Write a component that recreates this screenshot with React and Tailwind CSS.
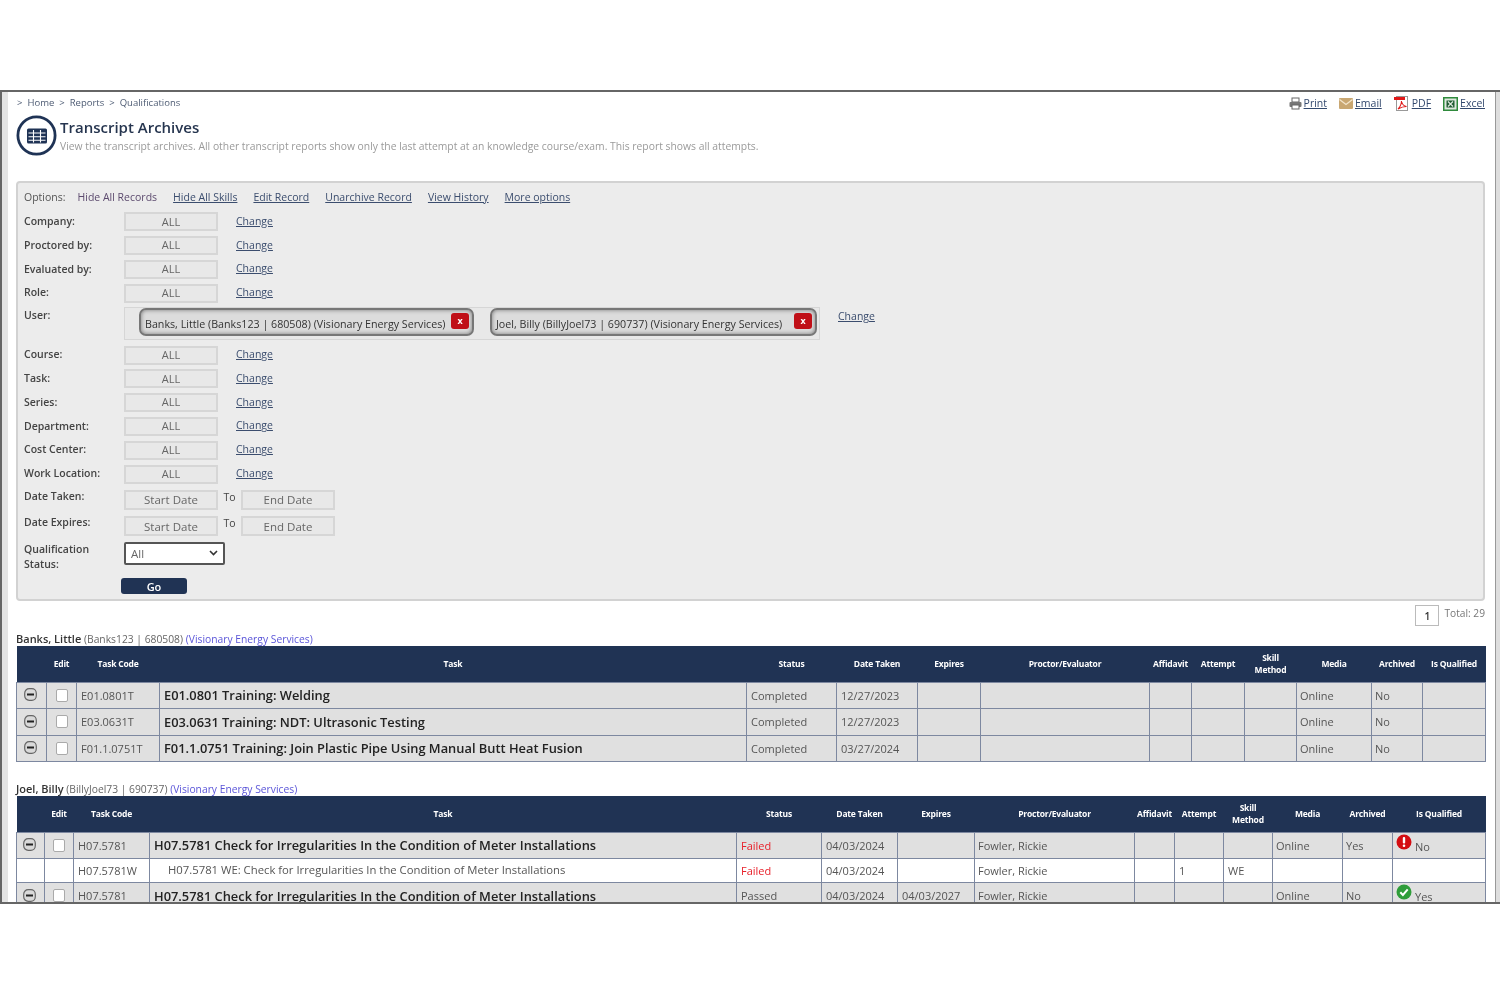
/**
 * Transcript Archives report page
 */

const font = { fontFamily: '"Open Sans", "Noto Sans", sans-serif' };

function PageIcon() {
    return (
        <svg width="41" height="41" viewBox="0 0 41 41" className="shrink-0">
            <circle cx="20.5" cy="20.5" r="18.6" fill="#fff" stroke="#1f3355" strokeWidth="2.8" />
            <rect x="11" y="13.5" width="20" height="15" rx="1.5" fill="#1f3355" />
            <path d="M12.5 18h17M12.5 21.7h17M12.5 25.3h17M17.5 15v12.5M24.5 15v12.5" stroke="#fff" strokeWidth="1.1" />
        </svg>
    );
}

function PrintIcon() {
    return (
        <svg width="13" height="13" viewBox="0 0 13 13">
            <rect x="3" y="1" width="7" height="4" fill="#fff" stroke="#666" />
            <rect x="0.5" y="5" width="12" height="5" rx="1" fill="#777" />
            <rect x="3" y="8" width="7" height="4" fill="#fff" stroke="#666" />
        </svg>
    );
}

function MailIcon() {
    return (
        <svg width="14" height="11" viewBox="0 0 14 11">
            <rect width="14" height="11" rx="1" fill="#c9a772" />
            <path d="M0.5 1.5 7 6.5l6.5-5" fill="none" stroke="#f3e5cc" strokeWidth="1.3" />
        </svg>
    );
}

function PdfIcon() {
    return (
        <svg width="16" height="15" viewBox="0 0 16 15">
            <rect x="2.5" y="0.5" width="11" height="14" fill="#fff" stroke="#999" />
            <rect x="0" y="1" width="11" height="3" fill="#e01818" />
            <path d="M4 13c2-2 3.500-5 3.500-8 .5 3 2.500 5 5 5.500-3 0-6 1-8.500 2.500Z" fill="none" stroke="#e01818" strokeWidth="1.1" />
        </svg>
    );
}

function ExcelIcon() {
    return (
        <svg width="15" height="14" viewBox="0 0 15 14">
            <rect x="0.750" y="0.750" width="13.500" height="12.500" fill="#dfe8df" stroke="#2f8a3c" strokeWidth="1.500" />
            <rect x="3.500" y="3.500" width="8" height="7" fill="#1f5c30" />
            <path d="m5 4.500 5 5m0-5-5 5" stroke="#dfe8df" strokeWidth="1.200" />
        </svg>
    );
}

function TopLink({ icon, label }) {
    return (
        <span className="flex items-center gap-[2px]">
            {icon}
            <a className="text-[10.5px] text-[#33496e] underline">{label}</a>
        </span>
    );
}

function Box({ label }) {
    return (
        <div className="w-[94px] h-[19px] bg-[#e8e8e8] border-2 border-[#d6d6d6] flex items-center justify-center text-[11px] text-[#666]">
            {label}
        </div>
    );
}

function ChangeLink({ className }) {
    return <a className={`text-[10.5px] leading-[14px] text-[#3b4d6e] underline ${className}`}>Change</a>;
}

function FilterRow({ label }) {
    return (
        <div className="flex items-center h-[23.800px]">
            <span className="w-[100px] text-[10.500px] font-semibold text-[#444]">{label}</span>
            <Box label="ALL" />
            <ChangeLink className="ml-[18px] mb-[2px]" />
        </div>
    );
}

function UserChip({ children, width }) {
    return (
        <div className={`${width} h-[28px] -mt-[3px] rounded-[7px] border-2 border-[#777] bg-[#dcdcdc] shadow-[inset_0_0_4px_#777] flex items-center justify-between pl-[4px] pr-[3px]`}>
            <span className="text-[10.700px] text-[#333] whitespace-nowrap pt-[4px]">{children}</span>
            <span className="w-[18px] h-[16px] mb-[3px] bg-[#c00f17] rounded-[3px] text-white text-[9px] font-bold flex items-center justify-center leading-none">
                x
            </span>
        </div>
    );
}

function DateRow({ label }) {
    return (
        <div className="flex h-[26.500px] items-start">
            <span className="w-[100px] text-[10.500px] font-semibold text-[#444] -mt-[1px]">{label}</span>
            <div className="w-[94px] h-[20px] bg-[#e8e8e8] border-2 border-[#d6d6d6] flex items-center justify-center text-[11.500px] text-[#666]">
                Start Date
            </div>
            <span className="w-[23px] text-center text-[10.500px] text-[#444]">To</span>
            <div className="w-[94px] h-[20px] bg-[#e8e8e8] border-2 border-[#d6d6d6] flex items-center justify-center text-[11.500px] text-[#666]">
                End Date
            </div>
        </div>
    );
}

function MinusIcon() {
    return (
        <svg width="13" height="13" viewBox="0 0 13 13" className="mx-auto -mt-[1px]">
            <rect x="0.700" y="0.700" width="11.600" height="11.600" rx="4.500" fill="#d9d9d9" stroke="#666" strokeWidth="1.200" />
            <rect x="3" y="5.500" width="7" height="2" fill="#222" />
        </svg>
    );
}

function CheckBox() {
    return <div className="w-[12px] h-[13px] mx-auto bg-white border border-[#aaa] rounded-[2px]" />;
}

function FailIcon() {
    return (
        <svg width="16" height="16" viewBox="0 0 16 16" className="inline-block align-[1px] mr-[3px]">
            <circle cx="8" cy="8" r="7.500" fill="#d40d12" />
            <rect x="6.800" y="3" width="2.400" height="6.500" rx="1" fill="#fff" />
            <circle cx="8" cy="11.800" r="1.300" fill="#fff" />
        </svg>
    );
}

function PassIcon() {
    return (
        <svg width="16" height="16" viewBox="0 0 16 16" className="inline-block align-[1px] mr-[3px]">
            <circle cx="8" cy="8" r="7.500" fill="#2f9d3a" />
            <path d="m4.300 8.300 2.600 2.700 4.800-5.600" fill="none" stroke="#fff" strokeWidth="2" />
        </svg>
    );
}

const headers = ['', 'Edit', 'Task Code', 'Task', 'Status', 'Date Taken', 'Expires', 'Proctor/Evaluator', 'Affidavit', 'Attempt', 'Skill Method', 'Media', 'Archived', 'Is Qualified'];

function ReportTable({ widths, rows }) {
    return (
        <table className="table-fixed border-collapse w-[1469px]">
            <colgroup>
                {widths.map((w, i) => (
                    <col key={i} style={{ width: w }} />
                ))}
            </colgroup>
            <thead>
                <tr className="h-[36px] bg-[#203354]">
                    {headers.map((h, i) => (
                        <th key={i} className="text-white text-[8.500px] tracking-[-0.2px] font-bold text-center leading-[12px] pt-[1px]">
                            {h === 'Skill Method' ? (
                                <>
                                    Skill
                                    <br />
                                    Method
                                </>
                            ) : (
                                <span className="whitespace-nowrap">{h}</span>
                            )}
                        </th>
                    ))}
                </tr>
            </thead>
            <tbody>
                {rows.map((r, i) => (
                    <tr key={i} className={`${r.sub ? 'bg-white h-[24px]' : 'bg-[#e0e0e0] h-[26.500px]'} text-[11px] text-[#555]`}>
                        <td className="border border-[#7d88a0] p-0 pr-[2px] text-center">{!r.sub && <MinusIcon />}</td>
                        <td className="border border-[#7d88a0] p-0">{!r.sub && <CheckBox />}</td>
                        <td className="border border-[#7d88a0] pl-[4px] pt-[1px] text-[11px] whitespace-nowrap">{r.code}</td>
                        <td className={`border border-[#7d88a0] whitespace-nowrap ${r.sub ? 'pl-[18px] text-[11.300px] text-[#555]' : 'pl-[4px] pt-[1px] text-[12.850px] font-semibold text-[#222]'}`}>
                            {r.task}
                        </td>
                        <td className={`border border-[#7d88a0] pl-[4px] pt-[1px] ${r.status === 'Failed' ? 'text-[#e8202a]' : ''}`}>{r.status}</td>
                        <td className="border border-[#7d88a0] pl-[4px] pt-[1px]">{r.date}</td>
                        <td className="border border-[#7d88a0] pl-[4px] pt-[1px]">{r.expires}</td>
                        <td className="border border-[#7d88a0] pl-[3px] pt-[1px]">{r.proctor}</td>
                        <td className="border border-[#7d88a0]" />
                        <td className="border border-[#7d88a0] pl-[4px] pt-[1px]">{r.attempt}</td>
                        <td className="border border-[#7d88a0] pl-[4px] pt-[1px]">{r.method}</td>
                        <td className="border border-[#7d88a0] pl-[3px] pt-[1px]">{r.media}</td>
                        <td className="border border-[#7d88a0] pl-[3px] pt-[1px]">{r.archived}</td>
                        <td className="border border-[#7d88a0] pl-[3px] pb-[2px] leading-[16px] whitespace-nowrap">
                            {r.qualified === 'No' && <FailIcon />}
                            {r.qualified === 'Yes' && <PassIcon />}
                            {r.qualified}
                        </td>
                    </tr>
                ))}
            </tbody>
        </table>
    );
}

const firstRows = [
    { code: 'E01.0801T', task: 'E01.0801 Training: Welding', status: 'Completed', date: '12/27/2023', media: 'Online', archived: 'No' },
    { code: 'E03.0631T', task: 'E03.0631 Training: NDT: Ultrasonic Testing', status: 'Completed', date: '12/27/2023', media: 'Online', archived: 'No' },
    { code: 'F01.1.0751T', task: 'F01.1.0751 Training: Join Plastic Pipe Using Manual Butt Heat Fusion', status: 'Completed', date: '03/27/2024', media: 'Online', archived: 'No' },
];

const secondRows = [
    { code: 'H07.5781', task: 'H07.5781 Check for Irregularities In the Condition of Meter Installations', status: 'Failed', date: '04/03/2024', proctor: 'Fowler, Rickie', media: 'Online', archived: 'Yes', qualified: 'No' },
    { sub: true, code: 'H07.5781W', task: 'H07.5781 WE: Check for Irregularities In the Condition of Meter Installations', status: 'Failed', date: '04/03/2024', proctor: 'Fowler, Rickie', attempt: '1', method: 'WE' },
    { code: 'H07.5781', task: 'H07.5781 Check for Irregularities In the Condition of Meter Installations', status: 'Passed', date: '04/03/2024', expires: '04/03/2027', proctor: 'Fowler, Rickie', media: 'Online', archived: 'No', qualified: 'Yes' },
];

function UserHeading({ name, meta }) {
    return (
        <div className="text-[10.300px] h-[15px] leading-[15px] whitespace-nowrap text-[#666]">
            <span className="text-[#333] text-[11px] font-semibold">{name}</span> ({meta}){' '}
            <span className="text-[#5a55d8]">(Visionary Energy Services)</span>
        </div>
    );
}

export default function App() {
    return (
        <div className="min-h-[1000px] bg-white pt-[90px]" style={font}>
            {/* Screenshot frame */}
            <div className="h-[814px] overflow-hidden border-y-2 border-[#666] flex">
                <div className="w-[8px] shrink-0 bg-[#e4e4e4] border-l-2 border-[#666]" />
                <div className="flex-1 min-w-0 pl-[8px] pr-[10px] blur-[0.4px]">
                    {/* Breadcrumb + export links */}
                    <div className="flex justify-between h-[23px] items-center">
                        <div className="flex gap-[5px] text-[9.500px] text-[#4d5b73] pl-[1px]">
                            <span>&gt;</span>
                            <span>Home</span>
                            <span>&gt;</span>
                            <span>Reports</span>
                            <span>&gt;</span>
                            <span>Qualifications</span>
                        </div>
                        <div className="flex gap-[12px] items-center">
                            <TopLink icon={<PrintIcon />} label="Print" />
                            <TopLink icon={<MailIcon />} label="Email" />
                            <TopLink icon={<PdfIcon />} label="PDF" />
                            <TopLink icon={<ExcelIcon />} label="Excel" />
                        </div>
                    </div>

                    {/* Page title */}
                    <div className="flex h-[66px]">
                        <PageIcon />
                        <div className="ml-[3px]">
                            <h1 className="text-[15px] leading-[22px] font-semibold text-[#26354f] mt-[1px]">Transcript Archives</h1>
                            <p className="text-[10.350px] leading-[14px] text-[#9a9a9a] mt-[1px] whitespace-nowrap">
                                View the transcript archives. All other transcript reports show only the last attempt at an knowledge course/exam. This report shows all attempts.
                            </p>
                        </div>
                    </div>

                    {/* Filter panel */}
                    <div className="h-[420px] bg-[#ececec] border-2 border-[#d2d2d2] rounded-[4px] pl-[6px] pt-[6px]">
                        <div className="flex h-[18px] items-center text-[10.500px] text-[#3b4d6e] gap-[16px]">
                            <span className="text-[#555] -mr-[4px]">Options:</span>
                            <span className="text-[#5c4a6e]">Hide All Records</span>
                            <a className="underline">Hide All Skills</a>
                            <a className="underline">Edit Record</a>
                            <a className="underline">Unarchive Record</a>
                            <a className="underline">View History</a>
                            <a className="underline">More options</a>
                        </div>
                        <div className="mt-[3px]">
                            <FilterRow label="Company:" />
                            <FilterRow label="Proctored by:" />
                            <FilterRow label="Evaluated by:" />
                            <FilterRow label="Role:" />
                        </div>
                        <div className="flex items-start h-[36px] mt-[2px]">
                            <span className="w-[100px] text-[10.500px] font-semibold text-[#444] pt-[1px]">User:</span>
                            <div className="w-[696px] h-[33px] bg-[#e8e8e8] border border-[#d6d6d6] flex items-center pl-[14px] gap-[16px]">
                                <UserChip width="w-[335px]">Banks, Little (Banks123 | 680508) (Visionary Energy Services)</UserChip>
                                <UserChip width="w-[327px]">Joel, Billy (BillyJoel73 | 690737) (Visionary Energy Services)</UserChip>
                            </div>
                            <ChangeLink className="ml-[18px] pt-[2px]" />
                        </div>
                        <FilterRow label="Course:" />
                        <FilterRow label="Task:" />
                        <FilterRow label="Series:" />
                        <FilterRow label="Department:" />
                        <FilterRow label="Cost Center:" />
                        <FilterRow label="Work Location:" />
                        <div className="mt-[4px]">
                            <DateRow label="Date Taken:" />
                            <DateRow label="Date Expires:" />
                        </div>
                        <div className="flex h-[36px] -mt-[1px]">
                            <span className="w-[100px] text-[10.500px] leading-[15px] font-semibold text-[#444]">
                                Qualification
                                <br />
                                Status:
                            </span>
                            <div className="w-[101px] h-[23px] bg-white border-2 border-[#555] rounded-[2px] flex items-center justify-between px-[5px] text-[11.500px] text-[#666]">
                                All
                                <svg width="9" height="6" viewBox="0 0 9 6">
                                    <path d="m1 1 3.500 3.500L8 1" fill="none" stroke="#333" strokeWidth="1.600" />
                                </svg>
                            </div>
                        </div>
                        <button type="button" className="block ml-[97px] w-[66px] h-[16px] bg-[#203354] rounded-[3px] text-white text-[11px] font-semibold leading-none pt-[1px]">
                            Go
                        </button>
                    </div>

                    {/* Pager */}
                    <div className="flex justify-end items-start gap-[5px] h-[30px] pt-[4px] text-[10.200px] text-[#777]">
                        <span className="w-[24px] h-[21px] border border-[#bbb] bg-white flex items-center justify-center text-[#333] font-semibold pt-[2px]">1</span>
                        <span className="pt-[1px]">Total: 29</span>
                    </div>

                    <UserHeading name="Banks, Little" meta="Banks123 | 680508" />
                    <ReportTable widths={[30, 30, 83, 587, 90, 81, 63, 169, 42, 53, 52, 75, 51, 63]} rows={firstRows} />

                    <div className="h-[19px]" />
                    <UserHeading name="Joel, Billy" meta="BillyJoel73 | 690737" />
                    <ReportTable widths={[28, 29, 76, 587, 85, 76, 77, 160, 40, 49, 49, 70, 50, 93]} rows={secondRows} />
                </div>
                <div className="w-[5px] shrink-0 bg-[#dedede] border-l border-[#999]" />
            </div>
        </div>
    );
}
